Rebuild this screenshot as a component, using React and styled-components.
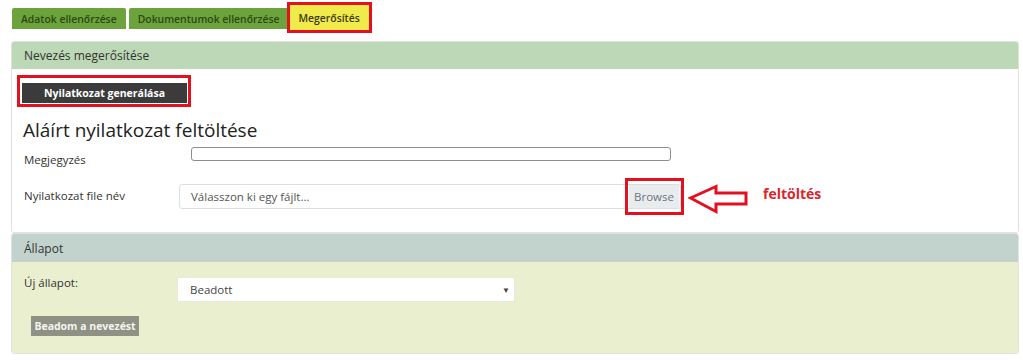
import React from "react";
import styled, { createGlobalStyle, css } from "styled-components";

const GlobalStyle = createGlobalStyle`
  html, body { margin: 0; padding: 0; background: #fff; }
  body { font-family: "Open Sans", "Noto Sans", sans-serif; color: #333; }
  * { box-sizing: border-box; }
`;

const Page = styled.div`
  padding: 0 4px 0 11px;
`;

const TabBar = styled.nav`
  display: flex;
  align-items: flex-start;
  gap: 3px;
  padding: 5px 0 0 1px;
`;

const Tab = styled.div`
  position: relative;
  display: flex;
  align-items: center;
  justify-content: center;
  height: 21px;
  margin-top: 3px;
  padding: 0 9px;
  background: #6da33c;
  color: #2b4a12;
  font-size: 10.4px;
  font-weight: 600;
  border-radius: 2px 2px 0 0;
  white-space: nowrap;
  ${(p) =>
    p.$active &&
    css`
      height: 25px;
      margin-top: 0;
      margin-left: -2px;
      padding: 0 9px;
      background: #f1ea4b;
      color: #3d3a10;
      border-radius: 0;
      &::after {
        content: "";
        position: absolute;
        inset: -3px;
        border: 3px solid #e3101f;
      }
    `}
`;

const Panel = styled.section`
  margin-top: ${(p) => p.$top || 0}px;
  border: 1px solid #dfe3dc;
  border-radius: 3px;
`;

const PanelHeader = styled.header`
  display: flex;
  align-items: center;
  height: ${(p) => p.$h}px;
  padding-left: 12px;
  background: ${(p) => p.$bg};
  font-size: 12px;
  color: #333;
  border-radius: 2px 2px 0 0;
`;

const PanelBody = styled.div`
  background: ${(p) => p.$bg || "#fff"};
  padding: ${(p) => p.$pad};
  border-radius: 0 0 2px 2px;
`;

const DarkButton = styled.button`
  position: relative;
  display: block;
  width: 165px;
  height: 20px;
  border: none;
  background: #3b3b3b;
  color: #fff;
  font-family: "Open Sans", sans-serif;
  font-size: 10.5px;
  font-weight: 700;
  padding: 0;
  &::after {
    content: "";
    position: absolute;
    left: -5px;
    right: -4px;
    top: -8px;
    bottom: -4px;
    border: 3px solid #e3101f;
  }
`;

const Heading = styled.h4`
  margin: 15px 0 0 1px;
  font-size: 19px;
  line-height: 24px;
  font-weight: 500;
  color: #222;
`;

const Row = styled.div`
  display: flex;
  align-items: ${(p) => p.$align || "center"};
  margin-top: ${(p) => p.$top}px;
`;

const Label = styled.label`
  flex: 0 0 ${(p) => p.$w}px;
  padding-left: 2px;
  margin-top: ${(p) => p.$mt || 0}px;
  font-size: 11.5px;
  line-height: 18px;
  color: #333;
`;

const NoteInput = styled.input`
  width: 480px;
  height: 14px;
  margin-top: 2px;
  border: 1px solid #8d8d8d;
  border-radius: 3px;
  background: #fff;
  padding: 0;
`;

const FileField = styled.div`
  display: flex;
  align-items: stretch;
  width: 502px;
  height: 25px;
  border: 1px solid #dadfe3;
  border-radius: 3px;
  background: #fff;
`;

const FilePlaceholder = styled.span`
  flex: 1;
  display: flex;
  align-items: center;
  padding-left: 11px;
  font-size: 11.5px;
  color: #555;
`;

const BrowseButton = styled.span`
  position: relative;
  display: flex;
  align-items: center;
  justify-content: center;
  width: 50px;
  margin: 0 1px 0 0;
  background: #e9ecef;
  color: #6c757d;
  font-size: 11.5px;
  &::after {
    content: "";
    position: absolute;
    left: -4px;
    right: -5px;
    top: -7px;
    bottom: -7px;
    border: 3px solid #e3101f;
  }
`;

const ArrowSvg = styled.svg`
  align-self: flex-start;
  margin: 6px 0 0 7px;
  flex: 0 0 auto;
`;

const Annotation = styled.span`
  align-self: flex-start;
  margin: 6px 0 0 13px;
  font-size: 14px;
  line-height: 20px;
  font-weight: 700;
  color: #d9252b;
`;

const SelectBox = styled.div`
  display: flex;
  align-items: center;
  justify-content: space-between;
  width: 338px;
  height: 25px;
  padding: 0 4px 0 12px;
  background: #fff;
  border: 1px solid #e6e9dc;
  border-radius: 2px;
  font-size: 11.5px;
  color: #444;
`;

const Caret = styled.span`
  font-size: 8px;
  color: #444;
`;

const SubmitButton = styled.button`
  display: block;
  margin: 14px 0 0 9px;
  width: 108px;
  height: 20px;
  padding: 0;
  border: none;
  background: #8e9184;
  color: #f4f4f0;
  font-family: "Open Sans", sans-serif;
  font-size: 10.5px;
  font-weight: 700;
`;

export default function App() {
  return (
    <>
      <GlobalStyle />
      <Page>
        <TabBar>
          <Tab>Adatok ellenőrzése</Tab>
          <Tab>Dokumentumok ellenőrzése</Tab>
          <Tab $active>Megerősítés</Tab>
        </TabBar>

        <Panel $top={11}>
          <PanelHeader $h={27} $bg="#bdd8b6">Nevezés megerősítése</PanelHeader>
          <PanelBody $pad="14px 10px 18px 10px">
            <DarkButton>Nyilatkozat generálása</DarkButton>
            <Heading>Aláírt nyilatkozat feltöltése</Heading>
            <Row $align="flex-start" $top={3}>
              <Label $w={169} $mt={6}>Megjegyzés</Label>
              <NoteInput />
            </Row>
            <Row $top={9}>
              <Label $w={157}>Nyilatkozat file név</Label>
              <FileField>
                <FilePlaceholder>Válasszon ki egy fájlt...</FilePlaceholder>
                <BrowseButton>Browse</BrowseButton>
              </FileField>
              <ArrowSvg width="62" height="30" viewBox="0 0 62 30">
                <path
                  d="M2.5 14 L28 2.5 L28 9 L58 9 L58 20 L28 20 L28 27.5 Z"
                  fill="#fff"
                  stroke="#e3101f"
                  strokeWidth="3"
                  strokeLinejoin="miter"
                />
              </ArrowSvg>
              <Annotation>feltöltés</Annotation>
            </Row>
          </PanelBody>
        </Panel>

        <Panel>
          <PanelHeader $h={28} $bg="#c2d3cd">Állapot</PanelHeader>
          <PanelBody $bg="#e9efcf" $pad="15px 12px 17px 10px">
            <Row $align="flex-start" $top={0}>
              <Label $w={155} $mt={-3}>Új állapot:</Label>
              <SelectBox role="combobox">
                <span>Beadott</span>
                <Caret>▼</Caret>
              </SelectBox>
            </Row>
            <SubmitButton>Beadom a nevezést</SubmitButton>
          </PanelBody>
        </Panel>
      </Page>
    </>
  );
}
